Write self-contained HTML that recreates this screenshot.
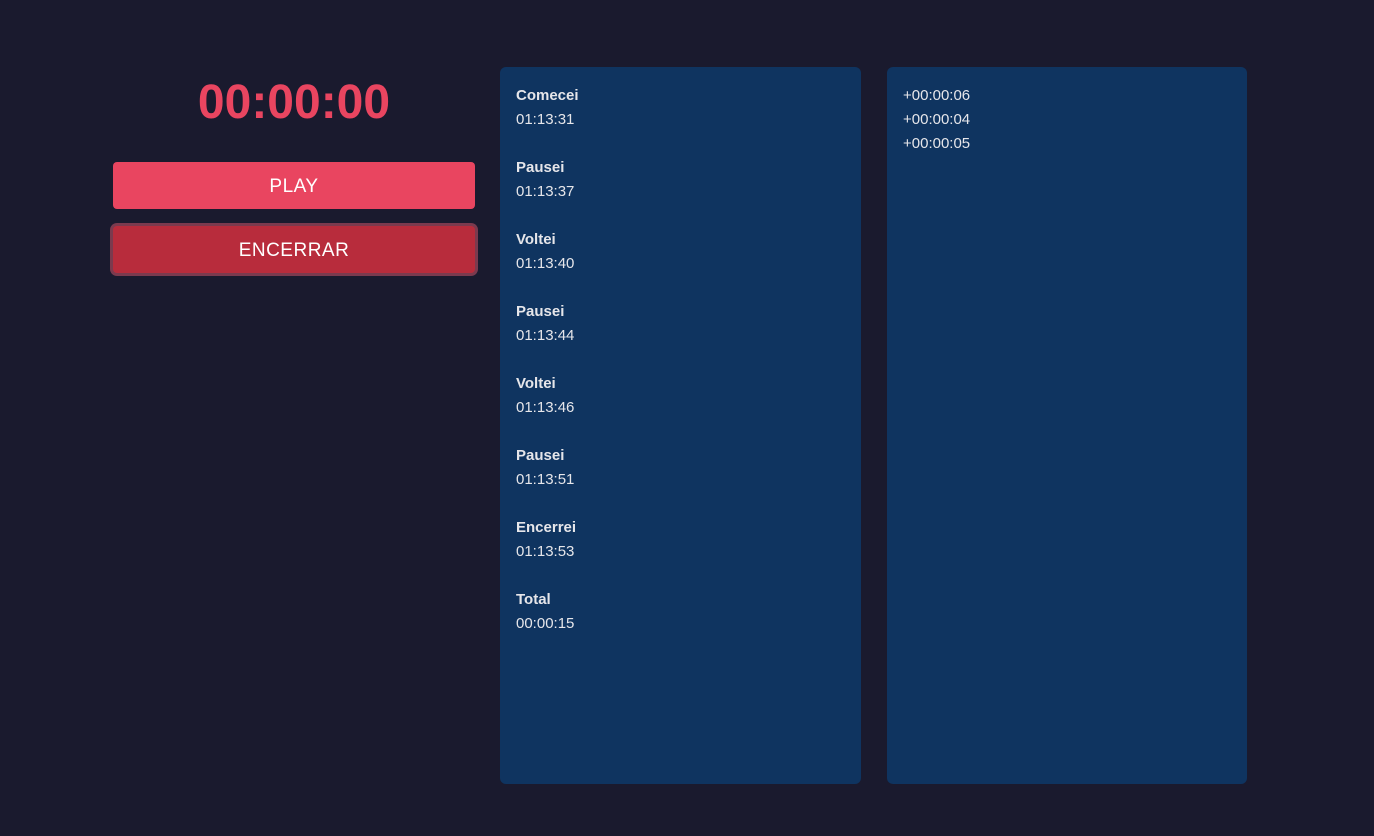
<!DOCTYPE html>
<html><head><style>
html,body{margin:0;padding:0;background:#1a1a2e;width:1374px;height:836px;overflow:hidden;font-family:"Liberation Sans",sans-serif;}
.timer{position:absolute;left:113px;width:362px;top:73px;text-align:center;color:#e94560;font-weight:bold;font-size:48px;line-height:60px;}
.btn{position:absolute;left:113px;width:362px;height:47px;border-radius:4px;color:#fff;font-size:19px;text-align:center;line-height:49px;letter-spacing:0.5px;}
.play{top:162px;background:#e94560;}
.enc{top:226px;background:#b82c3c;box-shadow:0 0 0 3px #7b3a4e;}
.panel{position:absolute;top:67px;height:717px;width:361px;background:#0f3460;border-radius:6px;color:#e6e6ea;font-size:15px;}
.inner{padding:17px 17px 17px 16px;line-height:24px;}
.g{margin-bottom:24px;}
b{font-weight:bold;}
</style></head><body>
<div class="timer">00:00:00</div>
<div class="btn play">PLAY</div>
<div class="btn enc">ENCERRAR</div>
<div class="panel" style="left:500px"><div class="inner">
<div class="g"><b>Comecei</b><br>01:13:31</div>
<div class="g"><b>Pausei</b><br>01:13:37</div>
<div class="g"><b>Voltei</b><br>01:13:40</div>
<div class="g"><b>Pausei</b><br>01:13:44</div>
<div class="g"><b>Voltei</b><br>01:13:46</div>
<div class="g"><b>Pausei</b><br>01:13:51</div>
<div class="g"><b>Encerrei</b><br>01:13:53</div>
<div class="g"><b>Total</b><br>00:00:15</div>
</div></div>
<div class="panel" style="left:887px;width:360px"><div class="inner">
+00:00:06<br>+00:00:04<br>+00:00:05
</div></div>
</body></html>
